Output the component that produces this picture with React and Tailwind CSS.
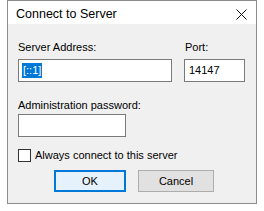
import React from "react";

export default function App() {
    return (
        <div
            className="w-[264px] h-[211px] bg-white overflow-hidden"
            style={{ fontFamily: '"Liberation Sans", Arial, sans-serif' }}
        >
            <div className="ml-[7px] w-[250px] h-[204px] border border-[#8c8c8c] flex flex-col">
                <div className="h-[23px] bg-white flex items-center justify-between pl-[8px] pr-[9px]">
                    <span className="text-[12.5px] text-black mt-[3px]">Connect to Server</span>
                    <svg width="11" height="11" viewBox="0 0 11 11" className="mt-[3px]">
                        <path d="M0.5 0.5 L10.5 10.5 M10.5 0.5 L0.5 10.5" stroke="#111" strokeWidth="1" fill="none" />
                    </svg>
                </div>
                <div className="flex-1 bg-[#f0f0f0] pl-[10px] pt-[16px] text-[11px] text-black">
                    <div className="flex gap-[12px]">
                        <div className="flex flex-col">
                            <span className="leading-[15px]">Server Address:</span>
                            <div className="mt-[4px] w-[154px] h-[23px] bg-white border border-[#7a7a7a] flex items-center pl-[3px]">
                                <span className="bg-[#0078d7] text-white leading-[15px] px-[1px]">[::1]</span>
                            </div>
                        </div>
                        <div className="flex flex-col">
                            <span className="leading-[15px] pl-[1px]">Port:</span>
                            <div className="mt-[4px] w-[61px] h-[23px] bg-white border border-[#7a7a7a] flex items-center pl-[4px]">
                                14147
                            </div>
                        </div>
                    </div>
                    <div className="mt-[16px] leading-[15px]">Administration password:</div>
                    <div className="mt-[1px] w-[108px] h-[23px] bg-white border border-[#7a7a7a]" />
                    <div className="mt-[11px] flex items-center gap-[4px]">
                        <div className="w-[13px] h-[13px] bg-white border border-[#333]" />
                        <span className="leading-[15px]">Always connect to this server</span>
                    </div>
                    <div className="mt-[7px] flex gap-[12px] pl-[36px]">
                        <button className="w-[72px] h-[22px] bg-[#e5f1fb] border-2 border-[#0078d7] text-[11px] flex items-center justify-center">
                            OK
                        </button>
                        <button className="w-[76px] h-[22px] bg-[#e1e1e1] border border-[#adadad] text-[11px] flex items-center justify-center">
                            Cancel
                        </button>
                    </div>
                </div>
            </div>
        </div>
    );
}
